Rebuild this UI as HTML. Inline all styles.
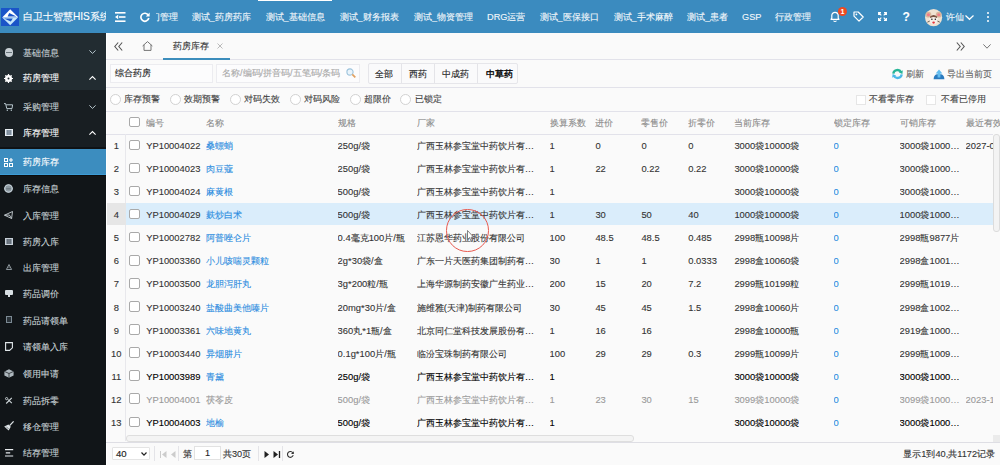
<!DOCTYPE html>
<html><head><meta charset="utf-8">
<style>
*{box-sizing:border-box;margin:0;padding:0}
html,body{width:1000px;height:465px;overflow:hidden}
body{position:relative;background:#fafafa;font-family:"Liberation Sans",sans-serif;font-size:9.2px;color:#333;-webkit-text-stroke:0.12px currentColor}
.a{position:absolute;white-space:nowrap}
svg{position:absolute;overflow:visible}
#hdr{position:absolute;left:0;top:0;width:1000px;height:33px;background:#3b8bbf;color:#fff}
#hdr .m{position:absolute;top:0;height:33px;line-height:34px;font-size:9.2px;color:#f2f7fb;-webkit-text-stroke:0.12px currentColor}
#side{position:absolute;left:0;top:33px;width:105.5px;height:432px;background:#111518;overflow:hidden}
.si{position:absolute;left:22.6px;height:20px;line-height:20px;color:#c8d2d6;white-space:nowrap;-webkit-text-stroke:0.1px currentColor}
.si.w{color:#fff}
#content{position:absolute;left:105.5px;top:33px;width:894.5px;height:432px;overflow:hidden}
.line{position:absolute;left:105.5px;width:894.5px;height:1px;background:#e2e2ea}
.th,.tr{position:absolute;left:0;width:1000px;height:23.08px;line-height:23.08px;font-size:9.4px}
.th{color:#8a8a8a}
.th .c,.tr .c{position:absolute;top:0;overflow:hidden;text-overflow:ellipsis;white-space:nowrap;-webkit-text-stroke:0.1px currentColor}
.tr .num{position:absolute;left:107px;width:18.5px;top:0;height:23.08px;text-align:center;color:#333}
.cb{position:absolute;width:10.6px;height:10.6px;border:1px solid #a9a9a9;border-radius:2px;background:#fff}
.link{color:#2b8ce0}
.hl{background:linear-gradient(#daedfb 0,#daedfb 22px,transparent 22px)}
.hl .num{background:linear-gradient(#e6e6e6 0,#e6e6e6 22px,transparent 22px)}
.dis .c{color:#999}
.dis .c.link{color:#2b8ce0}
.bold .c{color:#000;-webkit-text-stroke:0.12px #000}
.bold .c.link{color:#2b8ce0;-webkit-text-stroke:0.1px #2b8ce0}
.rd{position:absolute;width:11.2px;height:11.2px;border:1px solid #d2d2d2;border-radius:50%;background:#fff;top:93.8px}
.rt{position:absolute;top:88.8px;height:20px;line-height:20px;color:#444}
.btn{position:absolute;top:63.8px;height:20.6px;line-height:20.6px;color:#222;text-align:center}
.sep{position:absolute;width:1px;background:#e4e4e8}
</style></head><body>
<div id="hdr">
  <!-- logo -->
  <div class="a" style="left:1.1px;top:7.8px;width:18px;height:18.1px;background:#1a55c8"></div>
  <svg style="left:1.1px;top:7.8px" width="18" height="18" viewBox="0 0 18 18">
    <path d="M9.2 1.2 L17.2 9.2 L1.2 9.6 Z" fill="#fff"/>
    <path d="M1.2 9.6 L17.2 9.2 L9.2 17.2 Z" fill="#c6e8fb"/>
    <path d="M8.2 4.9 L15.4 8.4 L6.6 8.4 Z" fill="#1a55c8"/>
    <path d="M3 10.4 L11.8 10.4 L9.8 13.6 Z" fill="#1a55c8"/>
    </svg>
  <div class="a" style="left:23px;top:0;width:82.5px;height:33px;line-height:34px;font-size:10.1px;overflow:hidden;color:#fff">白卫士智慧HIS系统</div>
  <!-- outdent icon -->
  <svg style="left:115px;top:12px" width="11" height="10" viewBox="0 0 11 10">
    <rect x="0" y="0" width="10.5" height="1.6" fill="#fff"/>
    <rect x="4" y="4.2" width="6.5" height="1.6" fill="#fff"/>
    <rect x="0" y="8.4" width="10.5" height="1.6" fill="#fff"/>
    <path d="M0 5 L3.2 2.8 L3.2 7.2 Z" fill="#fff"/>
  </svg>
  <!-- refresh -->
  <svg style="left:139.5px;top:12px" width="10" height="10" viewBox="0 0 10 10">
    <path d="M8.3 3.2 A4 4 0 1 0 8.8 6" fill="none" stroke="#fff" stroke-width="1.7"/>
    <path d="M9.6 0.6 L9.6 4.4 L5.8 4.4 Z" fill="#fff"/>
  </svg>
  <div class="a" style="left:155.8px;top:0;width:30px;height:33px;overflow:hidden">
    <div class="m" style="left:-4.6px">门管理</div>
  </div>
  <div class="m" style="left:191.5px">测试_药房药库</div>
  <div class="a" style="left:258px;top:0;width:74px;height:1.3px;background:#fff"></div>
  <div class="m" style="left:265.5px">测试_基础信息</div>
  <div class="m" style="left:339.5px">测试_财务报表</div>
  <div class="m" style="left:414px">测试_物资管理</div>
  <div class="m" style="left:487px">DRG运营</div>
  <div class="m" style="left:539.5px">测试_医保接口</div>
  <div class="m" style="left:613.5px">测试_手术麻醉</div>
  <div class="m" style="left:687px">测试_患者</div>
  <div class="m" style="left:742px">GSP</div>
  <div class="m" style="left:775px">行政管理</div>
  <!-- bell -->
  <svg style="left:830px;top:10.5px" width="10" height="11" viewBox="0 0 10 11">
    <path d="M1 8.3 L1.8 7.2 L1.8 4.5 A3.2 3.2 0 0 1 8.2 4.5 L8.2 7.2 L9 8.3 Z" fill="none" stroke="#fff" stroke-width="1.2" stroke-linejoin="round"/>
    <path d="M3.6 9.6 A1.5 1.5 0 0 0 6.4 9.6" fill="none" stroke="#fff" stroke-width="1.1"/>
  </svg>
  <div class="a" style="left:838px;top:6.5px;width:9px;height:9px;border-radius:50%;background:#ee4a22;color:#fff;font-size:6.5px;line-height:9px;text-align:center;font-weight:bold">1</div>
  <!-- tag -->
  <svg style="left:853px;top:11px" width="11" height="11" viewBox="0 0 11 11">
    <path d="M1 1 L5.2 1 L10.2 6 L6 10.2 L1 5.2 Z" fill="none" stroke="#fff" stroke-width="1.2" stroke-linejoin="round"/>
    <circle cx="3.4" cy="3.4" r="0.9" fill="#fff"/>
  </svg>
  <!-- fullscreen -->
  <svg style="left:878px;top:12px" width="9" height="9" viewBox="0 0 9 9">
    <path d="M0.6 3 L0.6 0.6 L3 0.6 M6 0.6 L8.4 0.6 L8.4 3 M8.4 6 L8.4 8.4 L6 8.4 M3 8.4 L0.6 8.4 L0.6 6 M1 1 L3.3 3.3 M8 1 L5.7 3.3 M8 8 L5.7 5.7 M1 8 L3.3 5.7" fill="none" stroke="#fff" stroke-width="1.1"/>
  </svg>
  <div class="a" style="left:902.5px;top:0;height:33px;line-height:34px;font-size:12px;font-weight:bold;color:#fff">?</div>
  <!-- avatar -->
  <svg style="left:924.8px;top:8.5px" width="17.2" height="17.2" viewBox="0 0 18 18">
    <circle cx="9" cy="9" r="9" fill="#efe2d2"/>
    <circle cx="3.6" cy="6" r="3" fill="#d9b79c"/><circle cx="14.4" cy="6" r="3" fill="#d9b79c"/>
    <circle cx="3.6" cy="6" r="1.6" fill="#f27c86"/><circle cx="14.4" cy="6" r="1.6" fill="#f27c86"/>
    <ellipse cx="9" cy="11" rx="4.6" ry="5" fill="#f6efe8"/>
    <path d="M5 8 Q9 4.5 13 8 L12.4 9.4 Q9 7.6 5.6 9.4 Z" fill="#7a5240"/>
    <circle cx="7.2" cy="10.8" r="0.8" fill="#222"/><circle cx="10.8" cy="10.8" r="0.8" fill="#222"/>
    <ellipse cx="9" cy="14.2" rx="1.4" ry="1.2" fill="#e8343a"/>
    <path d="M2.5 13.8 L5 12.6 M15.5 13.8 L13 12.6" stroke="#6a5a50" stroke-width="1"/>
  </svg>
  <div class="m" style="left:946px">许仙</div>
  <svg style="left:964.5px;top:14.5px" width="9" height="5" viewBox="0 0 9 5">
    <path d="M0.5 0.5 L4.5 4.3 L8.5 0.5" fill="none" stroke="#fff" stroke-width="1.2"/>
  </svg>
  <div class="a" style="left:987px;top:11.5px;width:2.2px;height:2.2px;background:#fff;border-radius:50%"></div>
  <div class="a" style="left:987px;top:15.8px;width:2.2px;height:2.2px;background:#fff;border-radius:50%"></div>
  <div class="a" style="left:987px;top:20.1px;width:2.2px;height:2.2px;background:#fff;border-radius:50%"></div>
</div>

<div id="side">
  <div class="a" style="left:0;top:0;width:105.5px;height:56.6px;background:#222c31"></div>
  <div class="a" style="left:0;top:56.6px;width:105.5px;height:59px;background:#181e22"></div>
  <div class="a" style="left:0;top:113.8px;width:105.5px;height:2px;background:#0f1215"></div>
  <div class="a" style="left:0;top:115.7px;width:105.5px;height:26.6px;background:#3c8dbf"></div>
  <div class="a" style="left:0;top:141.3px;width:105.5px;height:1px;background:#3d9cd6"></div>
  <div class="a" style="left:0;top:142.3px;width:105.5px;height:1.2px;background:#0b0c0e"></div>
  <!-- top level -->
  <div class="a" style="left:4.5px;top:15.4px;width:8.4px;height:8.4px;border-radius:50%;background:#c8d0d5"></div>
  <div class="a" style="left:5.5px;top:19.2px;width:6.4px;height:0.9px;background:#6a767c"></div>
  <div class="si" style="top:9.6px">基础信息</div>
  <svg style="left:88.7px;top:17.4px" width="7" height="4" viewBox="0 0 7 4"><path d="M0.4 0.4 L3.5 3.4 L6.6 0.4" fill="none" stroke="#b8c7ce" stroke-width="1"/></svg>
  <svg style="left:4px;top:40.5px" width="9" height="9" viewBox="0 0 9 9"><circle cx="4.5" cy="4.5" r="2.6" fill="none" stroke="#fff" stroke-width="1.8"/><path d="M4.5 0 V9 M0 4.5 H9 M1.3 1.3 L7.7 7.7 M7.7 1.3 L1.3 7.7" stroke="#fff" stroke-width="1.2"/><circle cx="4.5" cy="4.5" r="1" fill="#222c31"/></svg>
  <div class="si w" style="top:35.2px">药房管理</div>
  <svg style="left:88.7px;top:43.2px" width="7" height="4" viewBox="0 0 7 4"><path d="M0.4 3.6 L3.5 0.6 L6.6 3.6" fill="none" stroke="#fff" stroke-width="1.1"/></svg>
  <!-- level 2 -->
  <svg style="left:4.3px;top:69.5px" width="9" height="8" viewBox="0 0 9 8"><path d="M0 0.6 H1.6 L2.8 5.6 H8 L8.6 1.8 H2.2" fill="none" stroke="#b8c7ce" stroke-width="1"/><circle cx="3.3" cy="7.2" r="0.7" fill="#b8c7ce"/><circle cx="7.3" cy="7.2" r="0.7" fill="#b8c7ce"/></svg>
  <div class="si" style="top:63.5px">采购管理</div>
  <svg style="left:88.7px;top:72px" width="7" height="4" viewBox="0 0 7 4"><path d="M0.4 0.4 L3.5 3.4 L6.6 0.4" fill="none" stroke="#b8c7ce" stroke-width="1"/></svg>
  <svg style="left:5px;top:95.5px" width="8" height="7" viewBox="0 0 8 7"><rect x="0.5" y="0.5" width="7" height="6" fill="#aab8c6" stroke="#e6edf2" stroke-width="1"/><path d="M2.7 1 V6 M4 1 V6 M5.3 1 V6" stroke="#3a4a58" stroke-width="0.5"/></svg>
  <div class="si w" style="top:89.7px">库存管理</div>
  <svg style="left:88.7px;top:97.5px" width="7" height="4" viewBox="0 0 7 4"><path d="M0.4 3.6 L3.5 0.6 L6.6 3.6" fill="none" stroke="#fff" stroke-width="1.1"/></svg>
  <!-- level 3 -->
  <svg style="left:4px;top:124.5px" width="9" height="9" viewBox="0 0 9 9"><rect x="0.5" y="0.5" width="3" height="3" fill="none" stroke="#fff" stroke-width="1"/><rect x="0.5" y="5.5" width="3" height="3" fill="none" stroke="#fff" stroke-width="1"/><rect x="5.5" y="5.5" width="3" height="3" fill="none" stroke="#fff" stroke-width="1"/><path d="M7 0 V4 M5 2 H9" stroke="#fff" stroke-width="1.1"/></svg>
  <div class="si w" style="top:119.4px">药房库存</div>
  <svg style="left:4px;top:151px" width="9" height="9" viewBox="0 0 9 9"><circle cx="4.5" cy="4.5" r="3.8" fill="#8e9aa2" stroke="#d6e2ea" stroke-width="1.1"/><path d="M2.2 4.8 H6.8" stroke="#5a666c" stroke-width="0.8"/></svg>
  <div class="si" style="top:146.0px">库存信息</div>
  <svg style="left:4px;top:178px" width="9" height="8" viewBox="0 0 9 8"><path d="M0.5 4.2 L8.5 0.5 L7.6 7.5 Z M0.5 4.2 L5.4 4 L7.6 7.5" fill="none" stroke="#c8d0d5" stroke-width="0.9" stroke-linejoin="round"/></svg>
  <div class="si" style="top:172.6px">入库管理</div>
  <svg style="left:5px;top:205px" width="8" height="7" viewBox="0 0 8 7"><rect x="0.5" y="0.5" width="7" height="6" fill="#8f9aa6" stroke="#c8d0d8" stroke-width="1"/><path d="M2.7 1 V6 M4 1 V6 M5.3 1 V6" stroke="#2a3038" stroke-width="0.5"/></svg>
  <div class="si" style="top:199.2px">药房入库</div>
  <svg style="left:6px;top:263.5px;top:230.5px" width="6" height="6" viewBox="0 0 6 6"><path d="M3 0.5 L5.6 5.5 H0.4 Z" fill="none" stroke="#9aa4aa" stroke-width="0.9"/><path d="M3 2.6 V4.2" stroke="#9aa4aa" stroke-width="0.8"/></svg>
  <div class="si" style="top:225.0px">出库管理</div>
  <div class="a" style="left:4.8px;top:256.5px;width:8px;height:5px;background:#d8dfe3;border-radius:1px"></div>
  <div class="a" style="left:7.5px;top:261.5px;width:2.5px;height:2px;background:#d8dfe3"></div>
  <div class="si" style="top:251.1px">药品调价</div>
  <div class="a" style="left:5.8px;top:283px;width:6px;height:6.5px;border:1px solid #7c8a94;background:#2a3238"></div>
  <div class="si" style="top:278.2px">药品请领单</div>
  <svg style="left:5px;top:308.5px" width="8" height="9" viewBox="0 0 8 9"><path d="M0.6 0.6 H7.4 V5.8 L4.6 8.4 H0.6 Z" fill="none" stroke="#e0e6e9" stroke-width="1.1"/></svg>
  <div class="si" style="top:304.4px">请领单入库</div>
  <svg style="left:4px;top:335.5px" width="10" height="9" viewBox="0 0 10 9"><path d="M5 0.3 L9.6 2.4 L9.6 6.6 L5 8.7 L0.4 6.6 L0.4 2.4 Z" fill="#aeb8be"/><path d="M0.4 2.4 L5 4.5 L9.6 2.4 M5 4.5 V8.7" stroke="#111518" stroke-width="0.7" fill="none"/></svg>
  <div class="si" style="top:331.4px">领用申请</div>
  <svg style="left:4.5px;top:363.5px" width="8" height="7" viewBox="0 0 8 7"><path d="M1.2 6.5 L6.8 0.8 M3.2 2.6 L6.8 6.2" stroke="#d0d8dc" stroke-width="1.1" fill="none"/><circle cx="1.6" cy="1.6" r="1.1" fill="none" stroke="#d0d8dc" stroke-width="0.9"/></svg>
  <div class="si" style="top:357.6px">药品拆零</div>
  <svg style="left:3.7px;top:388px" width="10" height="10" viewBox="0 0 10 10"><path d="M9.6 0.4 L5.6 4.6" stroke="#dfe5e8" stroke-width="1.3"/><path d="M4.4 3.4 L6.8 5.8 L4.6 9.6 L0.2 5.4 Z" fill="#dfe5e8"/><path d="M2.2 5.6 L4.6 8" stroke="#111518" stroke-width="0.5"/></svg>
  <div class="si" style="top:383.5px">移仓管理</div>
  <svg style="left:4.6px;top:415.5px" width="9" height="8" viewBox="0 0 9 8"><path d="M0 0.7 H8.2 M0.8 3.8 H5.2 M0 7 H8.2" stroke="#e8ecef" stroke-width="1.2"/></svg>
  <div class="si" style="top:410.1px">结存管理</div>
</div>

<!-- content area -->
<div class="a" style="left:105.5px;top:33px;width:1.6px;height:432px;background:#fff"></div>
<!-- tab bar -->
<svg style="left:114px;top:42px" width="9" height="9" viewBox="0 0 9 9"><path d="M4.2 0.5 L0.8 4.5 L4.2 8.5 M8.2 0.5 L4.8 4.5 L8.2 8.5" fill="none" stroke="#555" stroke-width="1.1"/></svg>
<svg style="left:142px;top:41px" width="11" height="10" viewBox="0 0 11 10"><path d="M0.6 5 L5.5 0.6 L10.4 5 M2 3.8 V9.4 H9 V3.8" fill="none" stroke="#666" stroke-width="0.9"/></svg>
<div class="a" style="left:172.8px;top:36px;height:20px;line-height:20px;color:#333">药房库存</div>
<svg style="left:216.5px;top:43px" width="6" height="6" viewBox="0 0 6 6"><path d="M0.5 0.5 L5.5 5.5 M5.5 0.5 L0.5 5.5" stroke="#aaa" stroke-width="0.8"/></svg>
<div class="line" style="top:58.5px;left:105.5px"></div>
<div class="a" style="left:163px;top:57.6px;width:67px;height:2.2px;background:#3c8dbc"></div>
<svg style="left:956px;top:42px" width="9" height="9" viewBox="0 0 9 9"><path d="M0.8 0.5 L4.2 4.5 L0.8 8.5 M4.8 0.5 L8.2 4.5 L4.8 8.5" fill="none" stroke="#555" stroke-width="1.1"/></svg>
<svg style="left:983px;top:44px" width="8" height="5" viewBox="0 0 8 5"><path d="M0.4 0.4 L4 4.2 L7.6 0.4" fill="none" stroke="#666" stroke-width="0.9"/></svg>

<!-- toolbar -->
<div class="a" style="left:109.5px;top:63.6px;width:103px;height:19.2px;border:1px solid #ececf0;background:#fcfcfd"></div>
<div class="a" style="left:114.7px;top:64.2px;height:19.2px;line-height:19.2px;color:#222">综合药房</div>
<div class="a" style="left:216.4px;top:63.6px;width:143.2px;height:19.2px;border:1px solid #ececf0;background:#fcfcfd"></div>
<div class="a" style="left:222px;top:64.2px;width:121px;height:19.2px;line-height:19.2px;color:#aaa;overflow:hidden">名称/编码/拼音码/五笔码/条码</div>
<svg style="left:346px;top:68px" width="10" height="10" viewBox="0 0 10 10"><circle cx="4" cy="4" r="3.1" fill="#eaf4fb" stroke="#9cc3dc" stroke-width="1.1"/><path d="M6.3 6.3 L9.3 9.3" stroke="#e0a060" stroke-width="1.7"/></svg>
<div class="a" style="left:368px;top:62.8px;width:150px;height:20.8px;border:1px solid #e6e6ea;border-radius:2px;background:#fafafb"></div>
<div class="sep" style="left:400.8px;top:63.5px;height:19.5px"></div>
<div class="sep" style="left:434.4px;top:63.5px;height:19.5px"></div>
<div class="sep" style="left:476.8px;top:63.5px;height:19.5px"></div>
<div class="btn" style="left:375px;width:18.4px">全部</div>
<div class="btn" style="left:408.5px;width:18.4px">西药</div>
<div class="btn" style="left:442px;width:27.6px">中成药</div>
<div class="btn" style="left:485.5px;width:27.6px;color:#000;-webkit-text-stroke:0.35px #000">中草药</div>
<!-- refresh/export -->
<svg style="left:892px;top:69px" width="11" height="10" viewBox="0 0 11 10"><path d="M1.3 4.6 A4.2 4 0 0 1 9.2 3.2" fill="none" stroke="#27b597" stroke-width="2.3"/><path d="M9.7 5.4 A4.2 4 0 0 1 1.8 6.8" fill="none" stroke="#4cb9e8" stroke-width="2.3"/><path d="M10.8 1.2 L10.4 5 L6.9 3.6 Z" fill="#27b597"/><path d="M0.2 8.8 L0.6 5 L4.1 6.4 Z" fill="#4cb9e8"/></svg>
<div class="a" style="left:906px;top:65px;height:19px;line-height:19px;color:#666;-webkit-text-stroke:0.12px #666">刷新</div>
<svg style="left:933px;top:68.5px" width="12" height="11" viewBox="0 0 12 11"><path d="M0.6 10.2 C0.6 6.8 2.6 5.2 4.2 5.2 L7.8 5.2 C9.4 5.2 11.4 6.8 11.4 10.2 Z" fill="#2a7bbf"/><path d="M6 0.6 L9.4 4.4 L7.4 4.4 L7.4 8.6 L4.6 8.6 L4.6 4.4 L2.6 4.4 Z" fill="#62bdf0"/></svg>
<div class="a" style="left:947px;top:65px;height:19px;line-height:19px;color:#666;-webkit-text-stroke:0.12px #666">导出当前页</div>
<div class="line" style="top:87px"></div>

<!-- radio row -->
<div class="rd" style="left:110px"></div><div class="rt" style="left:124px">库存预警</div>
<div class="rd" style="left:169.6px"></div><div class="rt" style="left:184px">效期预警</div>
<div class="rd" style="left:229.8px"></div><div class="rt" style="left:244px">对码失效</div>
<div class="rd" style="left:289.5px"></div><div class="rt" style="left:304px">对码风险</div>
<div class="rd" style="left:349.5px"></div><div class="rt" style="left:364px">超限价</div>
<div class="rd" style="left:400px"></div><div class="rt" style="left:414.5px">已锁定</div>
<div class="a" style="left:855.6px;top:94.8px;width:10.2px;height:10.2px;border:1px solid #e6e6e6;background:#fff"></div>
<div class="rt" style="left:869px">不看零库存</div>
<div class="a" style="left:926px;top:94.8px;width:10.2px;height:10.2px;border:1px solid #e6e6e6;background:#fff"></div>
<div class="rt" style="left:940.6px">不看已停用</div>
<div class="line" style="top:111px"></div>

<!-- table -->
<div class="line" style="top:133.6px"></div>
<div class="a" style="left:125.4px;top:134px;width:1px;height:307px;background:#e8e8ec"></div>
<div id="tbl" style="position:absolute;left:0;top:0;width:1000px;height:465px;overflow:hidden;clip-path:inset(111.5px 0 24px 107px)">
<div class="th" style="top:110.70px">
<span class="cb" style="left:129.3px;top:6.2px"></span>
<span class="c" style="left:146.2px;width:60px">编号</span>
<span class="c" style="left:205.8px;width:130px">名称</span>
<span class="c" style="left:337.6px;width:78px">规格</span>
<span class="c" style="left:416.8px;width:126px">厂家</span>
<span class="c" style="left:549.6px;width:46px">换算系数</span>
<span class="c" style="left:595.4px;width:46px">进价</span>
<span class="c" style="left:641.4px;width:46px">零售价</span>
<span class="c" style="left:688.2px;width:46px">折零价</span>
<span class="c" style="left:734.4px;width:98px">当前库存</span>
<span class="c" style="left:833.6px;width:64px">锁定库存</span>
<span class="c" style="left:899.6px;width:65px">可销库存</span>
<span class="c" style="left:965.6px;width:62px">最近有效期</span>
</div>
<div class="tr" style="top:133.95px">
<span class="num">1</span>
<span class="cb" style="left:129.3px;top:5.6px"></span>
<span class="c" style="left:146.2px;width:58px">YP10004022</span>
<span class="c link" style="left:205.8px;width:128px">桑螵蛸</span>
<span class="c" style="left:337.6px;width:76px">250g/袋</span>
<span class="c" style="left:416.8px;width:124px">广西玉林参宝堂中药饮片有限公司</span>
<span class="c" style="left:549.6px;width:44px">1</span>
<span class="c" style="left:595.4px;width:44px">0</span>
<span class="c" style="left:641.4px;width:44px">0</span>
<span class="c" style="left:688.2px;width:44px">0</span>
<span class="c" style="left:734.4px;width:96px">3000袋10000袋</span>
<span class="c link" style="left:833.6px;width:62px">0</span>
<span class="c" style="left:899.6px;width:63px">3000袋10000袋</span>
<span class="c" style="left:965.6px;width:60px">2027-01-01</span>
</div>
<div class="tr" style="top:157.03px">
<span class="num">2</span>
<span class="cb" style="left:129.3px;top:5.6px"></span>
<span class="c" style="left:146.2px;width:58px">YP10004023</span>
<span class="c link" style="left:205.8px;width:128px">肉豆蔻</span>
<span class="c" style="left:337.6px;width:76px">250g/袋</span>
<span class="c" style="left:416.8px;width:124px">广西玉林参宝堂中药饮片有限公司</span>
<span class="c" style="left:549.6px;width:44px">1</span>
<span class="c" style="left:595.4px;width:44px">22</span>
<span class="c" style="left:641.4px;width:44px">0.22</span>
<span class="c" style="left:688.2px;width:44px">0.22</span>
<span class="c" style="left:734.4px;width:96px">3000袋10000袋</span>
<span class="c link" style="left:833.6px;width:62px">0</span>
<span class="c" style="left:899.6px;width:63px">3000袋10000袋</span>
<span class="c" style="left:965.6px;width:60px"></span>
</div>
<div class="tr" style="top:180.11px">
<span class="num">3</span>
<span class="cb" style="left:129.3px;top:5.6px"></span>
<span class="c" style="left:146.2px;width:58px">YP10004024</span>
<span class="c link" style="left:205.8px;width:128px">麻黄根</span>
<span class="c" style="left:337.6px;width:76px">500g/袋</span>
<span class="c" style="left:416.8px;width:124px">广西玉林参宝堂中药饮片有限公司</span>
<span class="c" style="left:549.6px;width:44px">1</span>
<span class="c" style="left:595.4px;width:44px"></span>
<span class="c" style="left:641.4px;width:44px"></span>
<span class="c" style="left:688.2px;width:44px"></span>
<span class="c" style="left:734.4px;width:96px">3000袋10000袋</span>
<span class="c link" style="left:833.6px;width:62px">0</span>
<span class="c" style="left:899.6px;width:63px">3000袋10000袋</span>
<span class="c" style="left:965.6px;width:60px"></span>
</div>
<div class="tr hl" style="top:203.19px">
<span class="num">4</span>
<span class="cb" style="left:129.3px;top:5.6px"></span>
<span class="c" style="left:146.2px;width:58px">YP10004029</span>
<span class="c link" style="left:205.8px;width:128px">麸炒白术</span>
<span class="c" style="left:337.6px;width:76px">500g/袋</span>
<span class="c" style="left:416.8px;width:124px">广西玉林参宝堂中药饮片有限公司</span>
<span class="c" style="left:549.6px;width:44px">1</span>
<span class="c" style="left:595.4px;width:44px">30</span>
<span class="c" style="left:641.4px;width:44px">50</span>
<span class="c" style="left:688.2px;width:44px">40</span>
<span class="c" style="left:734.4px;width:96px">1000袋10000袋</span>
<span class="c link" style="left:833.6px;width:62px">0</span>
<span class="c" style="left:899.6px;width:63px">1000袋10000袋</span>
<span class="c" style="left:965.6px;width:60px"></span>
</div>
<div class="tr" style="top:226.27px">
<span class="num">5</span>
<span class="cb" style="left:129.3px;top:5.6px"></span>
<span class="c" style="left:146.2px;width:58px">YP10002782</span>
<span class="c link" style="left:205.8px;width:128px">阿普唑仑片</span>
<span class="c" style="left:337.6px;width:76px">0.4毫克100片/瓶</span>
<span class="c" style="left:416.8px;width:124px">江苏恩华药业股份有限公司</span>
<span class="c" style="left:549.6px;width:44px">100</span>
<span class="c" style="left:595.4px;width:44px">48.5</span>
<span class="c" style="left:641.4px;width:44px">48.5</span>
<span class="c" style="left:688.2px;width:44px">0.485</span>
<span class="c" style="left:734.4px;width:96px">2998瓶10098片</span>
<span class="c link" style="left:833.6px;width:62px">0</span>
<span class="c" style="left:899.6px;width:63px">2998瓶9877片</span>
<span class="c" style="left:965.6px;width:60px"></span>
</div>
<div class="tr" style="top:249.35px">
<span class="num">6</span>
<span class="cb" style="left:129.3px;top:5.6px"></span>
<span class="c" style="left:146.2px;width:58px">YP10003360</span>
<span class="c link" style="left:205.8px;width:128px">小儿咳喘灵颗粒</span>
<span class="c" style="left:337.6px;width:76px">2g*30袋/盒</span>
<span class="c" style="left:416.8px;width:124px">广东一片天医药集团制药有限公司</span>
<span class="c" style="left:549.6px;width:44px">30</span>
<span class="c" style="left:595.4px;width:44px">1</span>
<span class="c" style="left:641.4px;width:44px">1</span>
<span class="c" style="left:688.2px;width:44px">0.0333</span>
<span class="c" style="left:734.4px;width:96px">2998盒10060袋</span>
<span class="c link" style="left:833.6px;width:62px">0</span>
<span class="c" style="left:899.6px;width:63px">2998盒10016袋</span>
<span class="c" style="left:965.6px;width:60px"></span>
</div>
<div class="tr" style="top:272.43px">
<span class="num">7</span>
<span class="cb" style="left:129.3px;top:5.6px"></span>
<span class="c" style="left:146.2px;width:58px">YP10003500</span>
<span class="c link" style="left:205.8px;width:128px">龙胆泻肝丸</span>
<span class="c" style="left:337.6px;width:76px">3g*200粒/瓶</span>
<span class="c" style="left:416.8px;width:124px">上海华源制药安徽广生药业有限公司</span>
<span class="c" style="left:549.6px;width:44px">200</span>
<span class="c" style="left:595.4px;width:44px">15</span>
<span class="c" style="left:641.4px;width:44px">20</span>
<span class="c" style="left:688.2px;width:44px">7.2</span>
<span class="c" style="left:734.4px;width:96px">2999瓶10199粒</span>
<span class="c link" style="left:833.6px;width:62px">0</span>
<span class="c" style="left:899.6px;width:63px">2999瓶10199粒</span>
<span class="c" style="left:965.6px;width:60px"></span>
</div>
<div class="tr" style="top:295.51px">
<span class="num">8</span>
<span class="cb" style="left:129.3px;top:5.6px"></span>
<span class="c" style="left:146.2px;width:58px">YP10003240</span>
<span class="c link" style="left:205.8px;width:128px">盐酸曲美他嗪片</span>
<span class="c" style="left:337.6px;width:76px">20mg*30片/盒</span>
<span class="c" style="left:416.8px;width:124px">施维雅(天津)制药有限公司</span>
<span class="c" style="left:549.6px;width:44px">30</span>
<span class="c" style="left:595.4px;width:44px">45</span>
<span class="c" style="left:641.4px;width:44px">45</span>
<span class="c" style="left:688.2px;width:44px">1.5</span>
<span class="c" style="left:734.4px;width:96px">2998盒10060片</span>
<span class="c link" style="left:833.6px;width:62px">0</span>
<span class="c" style="left:899.6px;width:63px">2998盒10020片</span>
<span class="c" style="left:965.6px;width:60px"></span>
</div>
<div class="tr" style="top:318.59px">
<span class="num">9</span>
<span class="cb" style="left:129.3px;top:5.6px"></span>
<span class="c" style="left:146.2px;width:58px">YP10003361</span>
<span class="c link" style="left:205.8px;width:128px">六味地黄丸</span>
<span class="c" style="left:337.6px;width:76px">360丸*1瓶/盒</span>
<span class="c" style="left:416.8px;width:124px">北京同仁堂科技发展股份有限公司</span>
<span class="c" style="left:549.6px;width:44px">1</span>
<span class="c" style="left:595.4px;width:44px">16</span>
<span class="c" style="left:641.4px;width:44px">16</span>
<span class="c" style="left:688.2px;width:44px"></span>
<span class="c" style="left:734.4px;width:96px">2998盒10000瓶</span>
<span class="c link" style="left:833.6px;width:62px">0</span>
<span class="c" style="left:899.6px;width:63px">2919盒10000瓶</span>
<span class="c" style="left:965.6px;width:60px"></span>
</div>
<div class="tr" style="top:341.67px">
<span class="num">10</span>
<span class="cb" style="left:129.3px;top:5.6px"></span>
<span class="c" style="left:146.2px;width:58px">YP10003440</span>
<span class="c link" style="left:205.8px;width:128px">异烟肼片</span>
<span class="c" style="left:337.6px;width:76px">0.1g*100片/瓶</span>
<span class="c" style="left:416.8px;width:124px">临汾宝珠制药有限公司</span>
<span class="c" style="left:549.6px;width:44px">100</span>
<span class="c" style="left:595.4px;width:44px">29</span>
<span class="c" style="left:641.4px;width:44px">29</span>
<span class="c" style="left:688.2px;width:44px">0.3</span>
<span class="c" style="left:734.4px;width:96px">2999瓶10099片</span>
<span class="c link" style="left:833.6px;width:62px">0</span>
<span class="c" style="left:899.6px;width:63px">2999瓶10099片</span>
<span class="c" style="left:965.6px;width:60px"></span>
</div>
<div class="tr bold" style="top:364.75px">
<span class="num">11</span>
<span class="cb" style="left:129.3px;top:5.6px"></span>
<span class="c" style="left:146.2px;width:58px">YP10003989</span>
<span class="c link" style="left:205.8px;width:128px">青黛</span>
<span class="c" style="left:337.6px;width:76px">250g/袋</span>
<span class="c" style="left:416.8px;width:124px">广西玉林参宝堂中药饮片有限公司</span>
<span class="c" style="left:549.6px;width:44px">1</span>
<span class="c" style="left:595.4px;width:44px"></span>
<span class="c" style="left:641.4px;width:44px"></span>
<span class="c" style="left:688.2px;width:44px"></span>
<span class="c" style="left:734.4px;width:96px">3000袋10000袋</span>
<span class="c link" style="left:833.6px;width:62px">0</span>
<span class="c" style="left:899.6px;width:63px">3000袋10000袋</span>
<span class="c" style="left:965.6px;width:60px"></span>
</div>
<div class="tr dis" style="top:387.83px">
<span class="num">12</span>
<span class="cb" style="left:129.3px;top:5.6px"></span>
<span class="c" style="left:146.2px;width:58px">YP10004001</span>
<span class="c" style="left:205.8px;width:128px">茯苓皮</span>
<span class="c" style="left:337.6px;width:76px">500g/袋</span>
<span class="c" style="left:416.8px;width:124px">广西玉林参宝堂中药饮片有限公司</span>
<span class="c" style="left:549.6px;width:44px">1</span>
<span class="c" style="left:595.4px;width:44px">23</span>
<span class="c" style="left:641.4px;width:44px">30</span>
<span class="c" style="left:688.2px;width:44px">15</span>
<span class="c" style="left:734.4px;width:96px">3099袋10000袋</span>
<span class="c link" style="left:833.6px;width:62px">0</span>
<span class="c" style="left:899.6px;width:63px">3099袋10000袋</span>
<span class="c" style="left:965.6px;width:60px">2023-12-01</span>
</div>
<div class="tr bold" style="top:410.91px">
<span class="num">13</span>
<span class="cb" style="left:129.3px;top:5.6px"></span>
<span class="c" style="left:146.2px;width:58px">YP10004003</span>
<span class="c link" style="left:205.8px;width:128px">地榆</span>
<span class="c" style="left:337.6px;width:76px">500g/袋</span>
<span class="c" style="left:416.8px;width:124px">广西玉林参宝堂中药饮片有限公司</span>
<span class="c" style="left:549.6px;width:44px">1</span>
<span class="c" style="left:595.4px;width:44px"></span>
<span class="c" style="left:641.4px;width:44px"></span>
<span class="c" style="left:688.2px;width:44px"></span>
<span class="c" style="left:734.4px;width:96px">3000袋10000袋</span>
<span class="c link" style="left:833.6px;width:62px">0</span>
<span class="c" style="left:899.6px;width:63px">3000袋10000袋</span>
<span class="c" style="left:965.6px;width:60px"></span>
</div>
</div>
<!-- v scrollbar -->
<div class="a" style="left:993px;top:134px;width:7px;height:301px;background:#fafafa"></div>
<div class="a" style="left:993.3px;top:134px;width:6.7px;height:98px;background:#f3f3f3;border:1px solid #dcdcdc;border-radius:3px"></div>
<!-- h scrollbar -->
<div class="a" style="left:125.8px;top:435px;width:508px;height:7px;background:#f4f4f4;border:1px solid #dedede;border-radius:3px"></div>
<div class="a" style="left:993px;top:435.2px;width:7px;height:6.8px;background:#ebebeb"></div>
<div class="line" style="top:442px;background:#dedee4"></div>

<!-- pager -->
<div class="a" style="left:112px;top:446.6px;width:37.6px;height:13.4px;border:1px solid #e4e4e4;background:#fff;border-radius:1px"></div>
<div class="a" style="left:116px;top:447.2px;height:13.4px;line-height:13.4px;color:#222;font-size:9.6px;-webkit-text-stroke:0.15px #222">40</div>
<svg style="left:141px;top:451.5px" width="6" height="4" viewBox="0 0 6 4"><path d="M0.5 0.5 L3 3.2 L5.5 0.5" fill="none" stroke="#222" stroke-width="1.2"/></svg>
<div class="sep" style="left:154.4px;top:446px;height:15px"></div>
<svg style="left:160px;top:451px" width="17" height="7" viewBox="0 0 17 7"><path d="M0.5 0 V7" stroke="#ccc" stroke-width="1"/><path d="M6.5 0 L2 3.5 L6.5 7 Z" fill="#ccc"/><path d="M15.5 0 L11 3.5 L15.5 7 Z" fill="#ccc"/></svg>
<div class="sep" style="left:178.4px;top:446px;height:15px"></div>
<div class="a" style="left:183.2px;top:446.8px;height:15px;line-height:15px;color:#333;-webkit-text-stroke:0.12px #333">第</div>
<div class="a" style="left:194px;top:446.4px;width:27px;height:14px;border:1px solid #e2e2e2;background:#fff;text-align:center;line-height:13.5px;color:#222">1</div>
<div class="a" style="left:223px;top:446.8px;height:15px;line-height:15px;color:#333;-webkit-text-stroke:0.12px #333">共30页</div>
<div class="sep" style="left:258px;top:446px;height:15px"></div>
<svg style="left:264px;top:451px" width="17" height="7" viewBox="0 0 17 7"><path d="M0.5 0 L5 3.5 L0.5 7 Z" fill="#222"/><path d="M9.5 0 L14 3.5 L9.5 7 Z" fill="#222"/><path d="M15.5 0 V7" stroke="#222" stroke-width="1.3"/></svg>
<div class="sep" style="left:282px;top:446px;height:15px"></div>
<svg style="left:287px;top:450.5px" width="7" height="7" viewBox="0 0 7 7"><path d="M5.8 1.8 A2.9 2.9 0 1 0 6.2 4.2" fill="none" stroke="#333" stroke-width="1.1"/><path d="M6.8 0.2 V3 H4 Z" fill="#333"/></svg>
<div class="a" style="left:900px;top:446px;width:95px;height:15px;line-height:15px;color:#333;text-align:right;-webkit-text-stroke:0.12px #333;padding-top:0.8px">显示1到40,共1172记录</div>

<!-- cursor highlight -->
<div class="a" style="left:446px;top:209px;width:42.5px;height:42.5px;border:1.3px solid #e85a50;border-radius:50%"></div>
<svg style="left:466.5px;top:229.5px" width="7" height="12" viewBox="0 0 7 12"><path d="M0.5 0.5 L0.5 9.5 L2.6 7.6 L4 11 L5.3 10.4 L4 7.2 L6.6 7.2 Z" fill="#fff" stroke="#666" stroke-width="0.8" stroke-linejoin="round"/></svg>
</body></html>
